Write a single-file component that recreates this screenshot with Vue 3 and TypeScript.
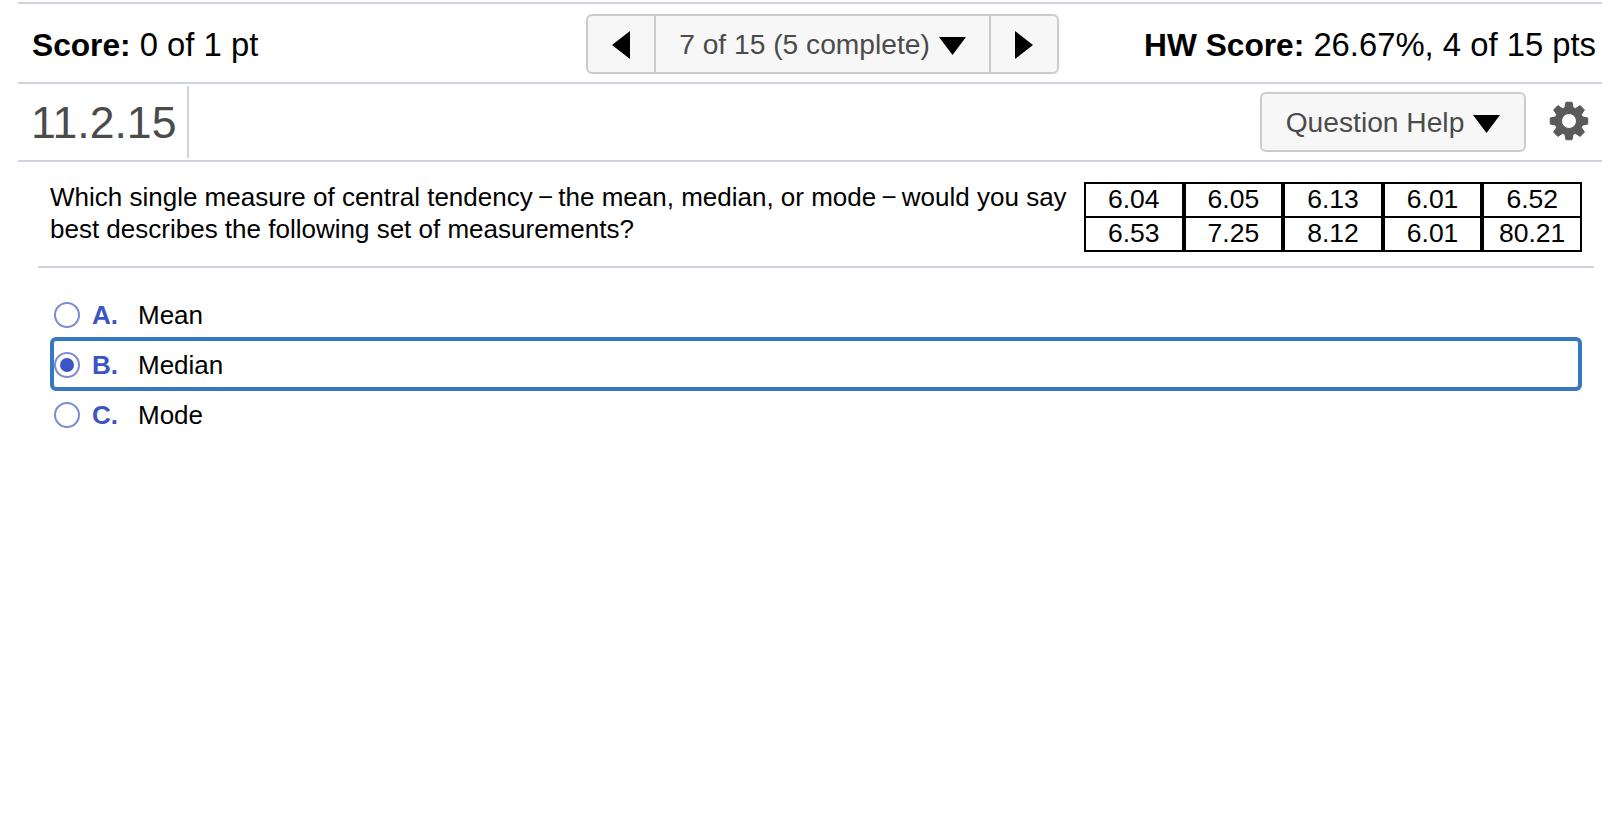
<script setup lang="ts">
const rows: string[][] = [
  ['6.04', '6.05', '6.13', '6.01', '6.52'],
  ['6.53', '7.25', '8.12', '6.01', '80.21'],
];
const options = [
  { key: 'A.', text: 'Mean', selected: false },
  { key: 'B.', text: 'Median', selected: true },
  { key: 'C.', text: 'Mode', selected: false },
];

// eight teeth around a 20,20 centre, with the hole cut by evenodd
function gearPath(): string {
  const pts: string[] = [];
  const at = (r: number, a: number) =>
    `${(20 + r * Math.cos(a)).toFixed(2)} ${(20 + r * Math.sin(a)).toFixed(2)}`;
  for (let i = 0; i < 8; i++) {
    const a = (i * Math.PI) / 4;
    pts.push(at(14, a - 0.3), at(19, a - 0.16), at(19, a + 0.16), at(14, a + 0.3));
  }
  return `M${pts.join('L')}Z M20 12.500a7.500 7.500 0 1 0 0 15a7.500 7.500 0 1 0 0-15Z`;
}
const gear = gearPath();
</script>

<template>
  <div class="page">
    <header class="score-bar">
      <div class="score"><b>Score:</b> 0 of 1 pt</div>
      <div class="pager">
        <button class="pager-arrow">
          <svg width="18" height="28" viewBox="0 0 18 28"><path d="M18 0V28L0 14Z" /></svg>
        </button>
        <button class="pager-label">
          7 of 15 (5 complete)
          <svg class="caret" width="27" height="18" viewBox="0 0 27 18"><path d="M0 0H27L13.500 18Z" /></svg>
        </button>
        <button class="pager-arrow">
          <svg width="18" height="28" viewBox="0 0 18 28"><path d="M0 0V28L18 14Z" /></svg>
        </button>
      </div>
      <div class="hw"><b>HW Score:</b> 26.67%, 4 of 15 pts</div>
    </header>

    <div class="title-bar">
      <div class="qnum">11.2.15</div>
      <button class="help">
        Question Help
        <svg class="caret" width="27" height="18" viewBox="0 0 27 18"><path d="M0 0H27L13.500 18Z" /></svg>
      </button>
      <svg class="gear" width="40" height="40" viewBox="0 0 40 40">
        <path fill-rule="evenodd" :d="gear" />
      </svg>
    </div>

    <section class="question">
      <p class="prompt">
        Which single measure of central tendency&thinsp;−&thinsp;the mean, median, or mode&thinsp;−&thinsp;would you say best describes the following set of measurements?
      </p>
      <table class="data">
        <tbody>
          <tr v-for="(row, i) in rows" :key="i">
            <td v-for="(cell, j) in row" :key="j">{{ cell }}</td>
          </tr>
        </tbody>
      </table>
    </section>

    <ul class="options">
      <li v-for="opt in options" :key="opt.key" class="option" :class="{ selected: opt.selected }">
        <span class="radio"><span v-if="opt.selected" class="dot"></span></span>
        <span class="opt-key">{{ opt.key }}</span>
        <span class="opt-text">{{ opt.text }}</span>
      </li>
    </ul>
  </div>
</template>

<style>
html, body { background: #fff; }
</style>

<style scoped>
.page { width: 1602px; height: 834px; overflow: hidden; box-sizing: border-box; padding-top: 2px; font-family: "Liberation Sans", Arial, sans-serif; color: #000; }
button { font-family: inherit; }

.score-bar { margin-left: 18px; height: 82px; box-sizing: border-box; border-top: 2px solid #cfd3e0; border-bottom: 2px solid #cfd3e0; display: flex; align-items: center; font-size: 32.800px; }
.score-bar b { font-size: 31.700px; }
.score { padding-left: 14px; margin-top: 4px; white-space: nowrap; width: 568px; box-sizing: border-box; }
.hw { margin-left: auto; margin-right: 6px; margin-top: 4px; white-space: nowrap; }

.pager { display: flex; width: 473px; height: 60px; margin-top: 1px; box-sizing: border-box; border: 2px solid #ccc; border-radius: 6px; background: #f7f7f7; }
.pager button { background: none; border: none; padding: 0; display: flex; align-items: center; justify-content: center; }
.pager-arrow { width: 66px; }
.pager-arrow svg { fill: #000; margin-top: 2px; }
.pager-label { flex: 1; border-left: 2px solid #ccc !important; border-right: 2px solid #ccc !important; font-size: 28.200px; color: #4b4b4b; gap: 9px; padding-top: 2px !important; }
.caret { fill: #000; margin-top: 3px; }

.title-bar { margin-left: 18px; height: 78px; box-sizing: border-box; border-bottom: 2px solid #cfd3e0; display: flex; align-items: center; }
.qnum { width: 171px; height: 72px; box-sizing: border-box; padding-left: 13px; border-right: 2px solid #cfd3e0; font-size: 44.600px; line-height: 74px; color: #4b4b4b; }
.help { margin-left: auto; width: 266px; height: 60px; box-sizing: border-box; border: 2px solid #ccc; border-radius: 6px; background: #f7f7f7; color: #4b4b4b; font-size: 28.200px; display: flex; align-items: center; justify-content: center; gap: 9px; padding: 0; }
.gear { fill: #5a5a5a; stroke: #5a5a5a; stroke-width: 1; stroke-linejoin: round; margin: -3px 13px 0 23px; }

.question { margin: 0 8px 0 38px; height: 106px; box-sizing: border-box; border-bottom: 2px solid #cfd3e0; display: flex; align-items: flex-start; padding: 19px 0 0 12px; }
.prompt { margin: 0; width: 1034px; flex: none; font-size: 26px; line-height: 32px; }
.data { border-collapse: separate; border-spacing: 0; font-size: 26.500px; table-layout: fixed; width: 498px; height: 70px; flex: none; margin-top: 1px; }
.data td { border: 2px solid #000; text-align: center; padding: 0; width: 20%; }
.data tr:first-child td { border-bottom: 0; }

.options { list-style: none; margin: 0; padding: 22px 0 0 50px; width: 1532px; }
.option { height: 50px; box-sizing: border-box; display: flex; align-items: center; font-size: 26px; border-radius: 6px; padding-left: 0; border: 4px solid transparent; }
.option.selected { border-color: #3778c2; height: 54px; margin: -3px 0 -1px; padding-top: 2px; }
.radio { width: 26px; height: 26px; box-sizing: border-box; border: 2.500px solid #7b8bd6; border-radius: 50%; display: flex; align-items: center; justify-content: center; }
.dot { width: 14px; height: 14px; border-radius: 50%; background: #3d55c4; }
.opt-key { width: 46px; margin-left: 12px; font-weight: 700; color: #3d55c4; }
</style>
